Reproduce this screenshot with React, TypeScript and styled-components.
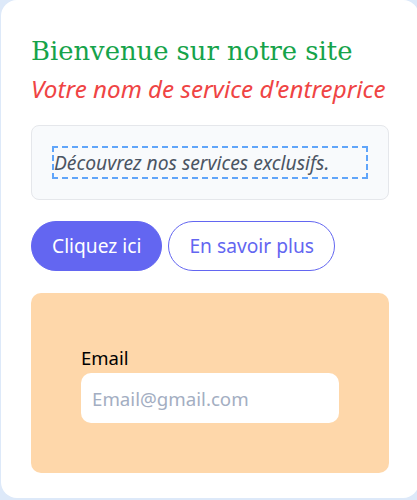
import React from "react";
import styled, { createGlobalStyle } from "styled-components";

const Global = createGlobalStyle`
  html, body { margin: 0; padding: 0; overflow: hidden; }
  body { background: #dde9f9; }
  * { box-sizing: border-box; }
`;

const Page = styled.div`
  padding: 0 0 3px 1px;
  width: 420px;
`;

const Card = styled.div`
  background: #ffffff;
  border-radius: 16px;
  padding: 30px 30px 25px 30px;
  width: 418px;
`;

const Title = styled.h1`
  margin: 0;
  font-family: "DejaVu Serif", serif;
  font-weight: 400;
  font-size: 25.8px;
  line-height: 42px;
  color: #16a34a;
  white-space: nowrap;
`;

const Subtitle = styled.p`
  margin: 0 0 20px;
  font-family: "Noto Sans", sans-serif;
  font-style: italic;
  font-size: 24.2px;
  line-height: 33px;
  color: #ef4444;
  white-space: nowrap;
`;

const InfoBox = styled.div`
  background: #f8fafc;
  border: 1px solid #e5e7eb;
  border-radius: 8px;
  padding: 20px;
`;

const Dashed = styled.p`
  margin: 0;
  border: 2px dashed #60a5fa;
  font-family: "Noto Sans", sans-serif;
  font-style: italic;
  font-size: 19.3px;
  line-height: 29px;
  color: #4b5563;
`;

const Actions = styled.div`
  display: flex;
  gap: 6px;
  margin-top: 21px;
`;

const Button = styled.button<{ $outline?: boolean }>`
  font-family: "Noto Sans", sans-serif;
  font-size: 19.2px;
  line-height: 26px;
  padding: 11px 20px;
  border-radius: 9999px;
  border: 1px solid #6366f1;
  background: ${(p) => (p.$outline ? "#ffffff" : "#6366f1")};
  color: ${(p) => (p.$outline ? "#6366f1" : "#ffffff")};
  cursor: pointer;
`;

const FormBox = styled.div`
  margin-top: 22px;
  background: #fed7aa;
  border-radius: 10px;
  padding: 50px;
`;

const Label = styled.label`
  display: block;
  font-family: "Noto Sans", sans-serif;
  font-size: 18.5px;
  line-height: 30px;
  color: #000000;
`;

const Input = styled.input`
  display: block;
  width: 258px;
  height: 50px;
  border: none;
  border-radius: 10px;
  background: #ffffff;
  padding: 0 11px;
  font-family: "Noto Sans", sans-serif;
  font-size: 18.7px;
  outline: none;
  &::placeholder { color: #a3aec2; }
`;

export default function App() {
  return (
    <>
      <Global />
      <Page>
        <Card>
          <Title>Bienvenue sur notre site</Title>
          <Subtitle>Votre nom de service d'entreprice</Subtitle>
          <InfoBox>
            <Dashed>Découvrez nos services exclusifs.</Dashed>
          </InfoBox>
          <Actions>
            <Button>Cliquez ici</Button>
            <Button $outline>En savoir plus</Button>
          </Actions>
          <FormBox>
            <Label htmlFor="email">Email</Label>
            <Input id="email" type="email" placeholder="Email@gmail.com" />
          </FormBox>
        </Card>
      </Page>
    </>
  );
}
